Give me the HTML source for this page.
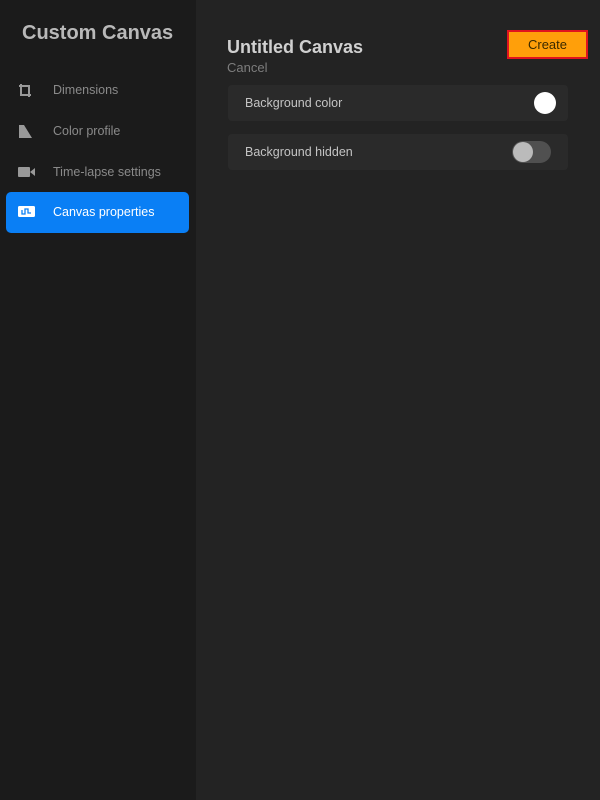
<!DOCTYPE html>
<html><head><style>
body{margin:0;width:600px;height:800px;background:#232323;font-family:"Liberation Sans",sans-serif;position:relative;overflow:hidden}
.side{position:absolute;left:0;top:0;width:196px;height:800px;background:#1b1b1b}
.t{position:absolute;left:22px;top:22px;font-size:20px;font-weight:bold;color:#b9b9b9}
.item{position:absolute;left:6px;width:183px;height:41px;border-radius:5px;color:#8a8a8a;font-size:12.5px}
.item span{position:absolute;left:47px;top:13px}
.item svg{position:absolute;left:12px;top:13px}
.sel{background:#0a7ff5;color:#fff}
.h{position:absolute;left:227px;top:37px;font-size:18px;font-weight:bold;color:#d0d0d0}
.c{position:absolute;left:227px;top:60px;font-size:13px;color:#7d7d7d}
.btn{position:absolute;left:507px;top:30px;width:77px;height:25px;background:#ff9f0a;border:2px solid #e0141e;color:#3a2a00;font-size:13px;text-align:center;line-height:25px}
.row{position:absolute;left:228px;width:340px;height:36px;background:#2a2a2a;border-radius:4px;color:#c4c4c4;font-size:12.5px}
.row span{position:absolute;left:17px;top:11px}
</style></head><body>
<div class="side">
<div class="t">Custom Canvas</div>
<div class="item" style="top:70px"><svg width="16" height="16" viewBox="0 0 16 16"><path d="M3 1v11h10M1 3h10v11" fill="none" stroke="#999" stroke-width="2"/></svg><span>Dimensions</span></div>
<div class="item" style="top:111px"><svg width="16" height="16" viewBox="0 0 16 16"><path d="M1 1h5l8 13H1z" fill="#999"/></svg><span>Color profile</span></div>
<div class="item" style="top:152px"><svg width="18" height="14" viewBox="0 0 18 14"><rect x="0" y="2" width="12" height="10" rx="1" fill="#999"/><path d="M12 7l5-4v8z" fill="#999"/></svg><span>Time-lapse settings</span></div>
<div class="item sel" style="top:192px"><svg width="17" height="14" viewBox="0 0 17 14"><rect x="0" y="1" width="17" height="11" rx="1.5" fill="#fff"/><path d="M4 5v4h3V4h3v4h3" fill="none" stroke="#0a7ff5" stroke-width="1.3"/></svg><span>Canvas properties</span></div>
</div>
<div class="h">Untitled Canvas</div>
<div class="c">Cancel</div>
<div class="btn">Create</div>
<div class="row" style="top:85px"><span>Background color</span><div style="position:absolute;left:306px;top:7px;width:22px;height:22px;border-radius:50%;background:#fff"></div></div>
<div class="row" style="top:134px"><span>Background hidden</span><div style="position:absolute;left:284px;top:7px;width:39px;height:22px;border-radius:11px;background:#505050"><div style="position:absolute;left:1px;top:1px;width:20px;height:20px;border-radius:50%;background:#bbb"></div></div></div>
</body></html>
